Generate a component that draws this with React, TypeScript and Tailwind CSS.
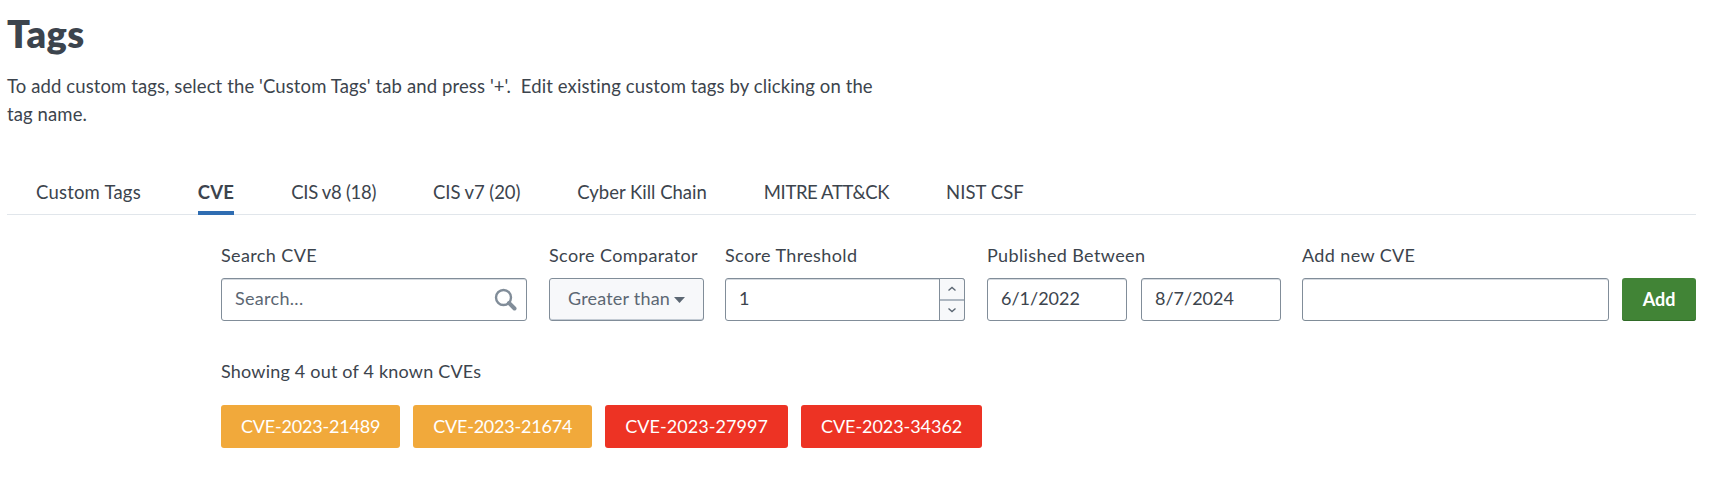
import React from "react";

const inputCls =
  "h-[43px] rounded-[3px] border border-[#818d99] bg-white px-[13px] pb-[3px] text-[18px] text-[#3c444d] outline-none shadow-[inset_0_1px_0_#d5dae0]";

function Label({ children }: { children: React.ReactNode }) {
  return <label className="block h-[33px] leading-[20px] text-[18px] tracking-[0.38px] text-[#3c444d] whitespace-nowrap">{children}</label>;
}

function Tag({ name, color, track }: { name: string; color: string; track: string }) {
  return (
    <span className={`flex h-[43px] items-center justify-center rounded-[3px] px-[20px] pb-[1px] text-[18px] text-white ${track} ${color}`}>
      {name}
    </span>
  );
}

const tabs = [
  { label: "Custom Tags", cls: "tracking-[0.2px]" },
  { label: "CVE", cls: "tracking-[0.2px] font-bold h-[37px] border-b-[4px] border-[#2f6db2]" },
  { label: "CIS v8 (18)", cls: "tracking-[-0.3px]" },
  { label: "CIS v7 (20)", cls: "tracking-[-0.1px]" },
  { label: "Cyber Kill Chain", cls: "tracking-[0px]" },
  { label: "MITRE ATT&CK", cls: "tracking-[-0.4px]" },
  { label: "NIST CSF", cls: "tracking-[0.05px]" },
];

export default function App() {
  return (
    <div className="h-[502px] w-[1714px] overflow-hidden bg-white pl-[7px] pr-[18px] font-['Lato',sans-serif] text-[#3c444d]">
      <h1 className="pt-[13px] pb-[1px] text-[38px] font-extrabold leading-[40px] tracking-[0.4px]">Tags</h1>
      <p className="mt-[18px] w-[880px] text-[18.5px] leading-[28px] tracking-[0.11px]">
        To add custom tags, select the 'Custom Tags' tab and press '+'.&nbsp; Edit existing custom tags by clicking on the tag name.
      </p>
      <nav className="mt-[50px] flex h-[37px] gap-[57px] border-b border-[#e1e6eb] pl-[29px] text-[18.5px]">
        {tabs.map((t) => (
          <span key={t.label} className={`leading-[29px] ${t.cls}`}>{t.label}</span>
        ))}
      </nav>

      <div className="ml-[214px] mt-[30px]">
        <div className="flex items-start">
          <div className="w-[306px]">
            <Label>Search CVE</Label>
            <div className="relative">
              <input readOnly placeholder="Search..." className={`${inputCls} w-full tracking-[0.3px] placeholder:text-[#5c6773]`} />
              <svg className="absolute right-[10px] top-[10px]" width="23" height="23" viewBox="0 0 23 23" fill="none">
                <circle cx="9.5" cy="9.5" r="7.5" stroke="#818d99" strokeWidth="2.4" />
                <path d="M15 15 L20.5 20.5" stroke="#818d99" strokeWidth="4" strokeLinecap="round" />
              </svg>
            </div>
          </div>
          <div className="ml-[22px] w-[155px]">
            <Label>Score Comparator</Label>
            <button className="flex h-[43px] w-full items-center justify-center gap-[4px] rounded-[3px] border border-[#818d99] bg-[#f7f8fa] pb-[2px] text-[18px] tracking-[0.2px] text-[#5c6773] shadow-[inset_0_-1px_0_#c3cbd4]">
              Greater than
              <svg className="mt-[2px]" width="11" height="6" viewBox="0 0 11 6"><path d="M0 0 H11 L5.5 6 Z" fill="#5c6773" /></svg>
            </button>
          </div>
          <div className="ml-[21px] w-[240px]">
            <Label>Score Threshold</Label>
            <div className="relative">
              <input readOnly value="1" className={`${inputCls} w-full`} />
              <div className="absolute right-0 top-0 flex h-[43px] w-[26px] flex-col overflow-hidden rounded-r-[3px] border border-[#818d99] bg-[#f7f8fa]">
                <span className="flex flex-1 items-center justify-center border-b-[2px] border-[#aeb7c1]">
                  <svg width="10" height="6" viewBox="0 0 10 6" fill="none"><path d="M1.5 4.5 L5 1.5 L8.5 4.5" stroke="#5c6773" strokeWidth="1.4" /></svg>
                </span>
                <span className="flex flex-1 items-center justify-center">
                  <svg width="10" height="6" viewBox="0 0 10 6" fill="none"><path d="M1.5 1.5 L5 4.5 L8.5 1.5" stroke="#5c6773" strokeWidth="1.4" /></svg>
                </span>
              </div>
            </div>
          </div>
          <div className="ml-[22px]">
            <Label>Published Between</Label>
            <div className="flex gap-[14px]">
              <input readOnly value="6/1/2022" className={`${inputCls} w-[140px]`} />
              <input readOnly value="8/7/2024" className={`${inputCls} w-[140px]`} />
            </div>
          </div>
          <div className="ml-[21px]">
            <Label>Add new CVE</Label>
            <div className="flex gap-[13px]">
              <input readOnly className={`${inputCls} w-[307px]`} />
              <button className="h-[43px] w-[74px] rounded-[3px] bg-[#418436] pb-[1px] text-[18px] font-bold text-white shadow-[inset_0_-1px_0_#2f6a27]">Add</button>
            </div>
          </div>
        </div>

        <p className="mt-[39px] text-[18px] leading-[22px] tracking-[0.2px]">Showing 4 out of 4 known CVEs</p>

        <div className="mt-[23px] flex gap-[13px]">
          <Tag name="CVE-2023-21489" color="bg-[#f1a93b]" track="tracking-[-0.2px]" />
          <Tag name="CVE-2023-21674" color="bg-[#f1a93b]" track="tracking-[-0.2px]" />
          <Tag name="CVE-2023-27997" color="bg-[#ed3324]" track="tracking-[0.05px]" />
          <Tag name="CVE-2023-34362" color="bg-[#ed3324]" track="tracking-[-0.05px]" />
        </div>
      </div>
    </div>
  );
}
